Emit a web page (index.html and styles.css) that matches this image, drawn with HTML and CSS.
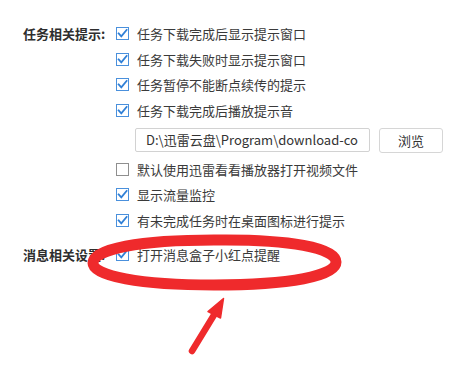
FILE: index.html
```html
<!DOCTYPE html>
<html lang="zh-CN">
<head>
<meta charset="utf-8">
<link rel="stylesheet" href="styles.css">
</head>
<body>
<div class="page">
  <div class="section">
    <div class="label">任务相关提示:</div>
    <div class="options">
      <div class="opt"><svg class="cb" viewBox="0 0 13 13"><rect x="0.5" y="0.5" width="12" height="12" class="box"/><path d="M2.6 6.4 L5.3 9.4 L10.6 2.9" class="tick"/></svg><span>任务下载完成后显示提示窗口</span></div>
      <div class="opt"><svg class="cb" viewBox="0 0 13 13"><rect x="0.5" y="0.5" width="12" height="12" class="box"/><path d="M2.6 6.4 L5.3 9.4 L10.6 2.9" class="tick"/></svg><span>任务下载失败时显示提示窗口</span></div>
      <div class="opt"><svg class="cb" viewBox="0 0 13 13"><rect x="0.5" y="0.5" width="12" height="12" class="box"/><path d="M2.6 6.4 L5.3 9.4 L10.6 2.9" class="tick"/></svg><span>任务暂停不能断点续传的提示</span></div>
      <div class="opt"><svg class="cb" viewBox="0 0 13 13"><rect x="0.5" y="0.5" width="12" height="12" class="box"/><path d="M2.6 6.4 L5.3 9.4 L10.6 2.9" class="tick"/></svg><span>任务下载完成后播放提示音</span></div>
      <div class="pathrow">
        <div class="path">D:\迅雷云盘\Program\download-co</div>
        <div class="btn">浏览</div>
      </div>
      <div class="opt"><svg class="cb off" viewBox="0 0 13 13"><rect x="0.5" y="0.5" width="12" height="12" class="box"/></svg><span>默认使用迅雷看看播放器打开视频文件</span></div>
      <div class="opt"><svg class="cb" viewBox="0 0 13 13"><rect x="0.5" y="0.5" width="12" height="12" class="box"/><path d="M2.6 6.4 L5.3 9.4 L10.6 2.9" class="tick"/></svg><span>显示流量监控</span></div>
      <div class="opt"><svg class="cb" viewBox="0 0 13 13"><rect x="0.5" y="0.5" width="12" height="12" class="box"/><path d="M2.6 6.4 L5.3 9.4 L10.6 2.9" class="tick"/></svg><span>有未完成任务时在桌面图标进行提示</span></div>
    </div>
  </div>
  <div class="section second">
    <div class="label">消息相关设置:</div>
    <div class="options">
      <div class="opt"><svg class="cb" viewBox="0 0 13 13"><rect x="0.5" y="0.5" width="12" height="12" class="box"/><path d="M2.6 6.4 L5.3 9.4 L10.6 2.9" class="tick"/></svg><span>打开消息盒子小红点提醒</span></div>
    </div>
  </div>
  <svg class="annot" viewBox="0 0 463 368" width="463" height="368">
    <path class="ring" d="M214 240 C 290 239, 336 248, 336 262 C 336 276, 290 285, 214 285 C 140 285, 93 276, 93 263 C 93 249, 140 240, 214 240 Z"/>
    <path class="shaft" d="M192 351 L214 315"/>
    <path class="head" d="M223.5 298.5 L208 311.5 L220.5 318 Z"/>
  </svg>
</div>
</body>
</html>
```
FILE: styles.css
```css
html, body {
  margin: 0;
  background: #ffffff;
}
body {
  font-family: "Noto Sans CJK SC", "Microsoft YaHei", sans-serif;
  font-size: 13px;
  color: #3a3a3a;
}
.page {
  position: relative;
  width: 463px;
  height: 368px;
  box-sizing: border-box;
  padding: 21px 0 0 23px;
  overflow: hidden;
}
.section {
  display: grid;
  grid-template-columns: 93px auto;
}
.section.second {
  margin-top: 8.5px;
}
.label {
  font-weight: bold;
  color: #2e2e2e;
  height: 25.5px;
  line-height: 25.5px;
  white-space: nowrap;
}
.options {
  display: flex;
  flex-direction: column;
}
.opt {
  height: 25.5px;
  display: flex;
  align-items: center;
  gap: 8px;
  white-space: nowrap;
}
.cb {
  width: 13px;
  height: 13px;
  flex: none;
}
.cb .box {
  fill: #ffffff;
  stroke: #4a90dc;
  stroke-width: 1;
}
.cb.off .box {
  stroke: #8f8f8f;
}
.cb .tick {
  fill: none;
  stroke: #2f7fd6;
  stroke-width: 1.8;
  stroke-linecap: square;
  stroke-linejoin: miter;
}
.pathrow {
  display: flex;
  align-items: flex-start;
  gap: 9px;
  margin: 5px 0 3.5px 19px;
}
.path {
  width: 235px;
  height: 24px;
  box-sizing: border-box;
  border: 1px solid #d2d2d2;
  border-radius: 2px;
  padding: 0 0 0 10px;
  line-height: 22px;
  white-space: nowrap;
  overflow: hidden;
  color: #333333;
}
.btn {
  width: 64px;
  height: 25px;
  box-sizing: border-box;
  border: 1px solid #d6d6d6;
  border-radius: 3px;
  text-align: center;
  line-height: 23px;
  color: #333333;
}
.annot {
  position: absolute;
  left: 0;
  top: 0;
  pointer-events: none;
}
.ring {
  fill: none;
  stroke: #ef2a2c;
  stroke-width: 11;
}
.shaft {
  fill: none;
  stroke: #ef2a2c;
  stroke-width: 6.5;
  stroke-linecap: round;
}
.head {
  fill: #ef2a2c;
  stroke: #ef2a2c;
  stroke-width: 1.5;
  stroke-linejoin: round;
}
```
